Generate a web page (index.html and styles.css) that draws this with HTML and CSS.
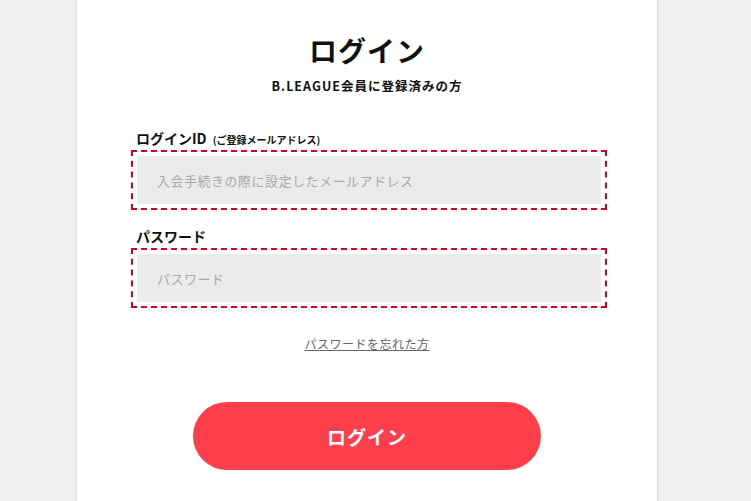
FILE: index.html
```html
<!DOCTYPE html>
<html lang="ja">
<head>
  <meta charset="UTF-8">
  <meta name="viewport" content="width=device-width, initial-scale=1.0">
  <title>ログイン</title>
  <link rel="stylesheet" href="styles.css">
</head>
<body>
  <div class="panel">
    <h1 class="title">ログイン</h1>
    <p class="lead">B.LEAGUE会員に登録済みの方</p>

    <form class="login-form" onsubmit="return false;">
      <label class="field-label" for="loginId">ログインID<small>(ご登録メールアドレス)</small></label>
      <div class="field-box">
        <input id="loginId" type="email" placeholder="入会手続きの際に設定したメールアドレス">
      </div>

      <label class="field-label" for="password">パスワード</label>
      <div class="field-box">
        <input id="password" type="password" placeholder="パスワード">
      </div>
    </form>

    <p class="forgot"><a href="#">パスワードを忘れた方</a></p>

    <div class="actions">
      <button class="login-btn" type="button">ログイン</button>
    </div>
  </div>
</body>
</html>
```

FILE: styles.css
```css
body {
  font-family: "Noto Sans CJK JP", "Noto Sans", sans-serif;
  background: #f0f0f0;
  margin: 0;
  padding: 0;
  color: #111;
}
.panel {
  width: 584px;
  min-height: 100vh;
  margin-left: 75px;
  background: white;
  border-left: 2px solid #e2e2e2;
  border-right: 2px solid #e2e2e2;
  padding-top: 30px;
  box-sizing: border-box;
}
.title {
  margin: 0;
  font-size: 28px;
  line-height: 40px;
  font-weight: 700;
  text-align: center;
  letter-spacing: 1px;
}
.lead {
  margin: 6px 0 0;
  font-size: 12.5px;
  line-height: 20px;
  font-weight: 700;
  text-align: center;
  letter-spacing: 1px;
}
.login-form {
  width: 476px;
  margin: 32px 0 0 54px;
}
.field-label {
  display: block;
  margin: 0 0 2px 5px;
  font-size: 14px;
  line-height: 20px;
  height: 20px;
  font-weight: 700;
}
.field-label small {
  font-size: 10px;
  line-height: 0;
  margin-left: 6px;
}
.field-box {
  border: 2px dashed #d8001e;
  padding: 4px;
  margin-bottom: 16px;
}
.field-box input {
  display: block;
  width: 100%;
  height: 48px;
  box-sizing: border-box;
  border: none;
  background: #ebebeb;
  padding: 0 20px;
  font-family: inherit;
  font-size: 13px;
  letter-spacing: 0.5px;
  color: #333;
  outline: none;
}
.field-box input::placeholder {
  color: #a8a8a8;
}
.forgot {
  margin: 26px 0 0;
  text-align: center;
  font-size: 12px;
  line-height: 20px;
  letter-spacing: 0.5px;
}
.forgot a {
  color: #666;
}
.actions {
  display: flex;
  justify-content: center;
  margin-top: 48px;
}
.login-btn {
  width: 348px;
  height: 68px;
  border: none;
  border-radius: 34px;
  background: #fc3f4b;
  color: white;
  font-family: inherit;
  font-size: 19px;
  font-weight: 700;
  letter-spacing: 1px;
  cursor: pointer;
}
```
